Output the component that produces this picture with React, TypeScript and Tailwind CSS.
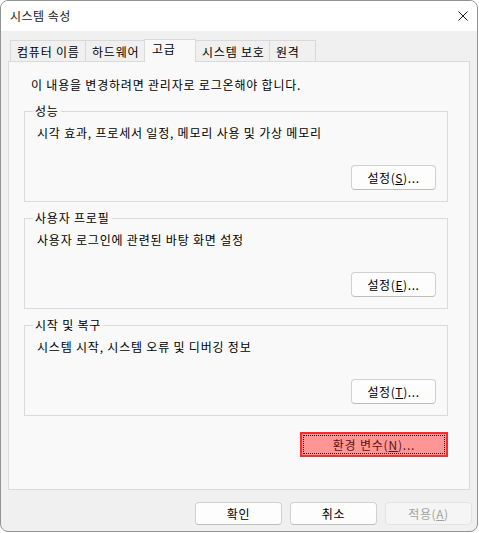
import type { ReactNode } from 'react'

const font = { fontFamily: '"Noto Sans CJK KR", "Noto Sans", sans-serif' }

const tabs = [
  { label: '컴퓨터 이름', w: 'w-[76px]' },
  { label: '하드웨어', w: 'w-[60px]' },
  { label: '고급', w: 'w-[52px]', active: true },
  { label: '시스템 보호', w: 'w-[75px]' },
  { label: '원격', w: 'w-[47px]' },
]

function WinButton({
  children,
  disabled = false,
  className = '',
}: {
  children: ReactNode
  disabled?: boolean
  className?: string
}) {
  return (
    <button
      type="button"
      disabled={disabled}
      className={`flex items-center justify-center rounded-[4px] border text-[12px] leading-[16px] tracking-[0.6px] ${
        disabled
          ? 'border-[#e3e3e3] bg-[#f5f5f5] text-[#a2a2a2]'
          : 'border-[#d0d0d0] border-b-[#bdbdbd] bg-[#fdfdfd] text-black'
      } ${className}`}
    >
      {children}
    </button>
  )
}

function Group({
  title,
  text,
  accel,
}: {
  title: string
  text: string
  accel: string
}) {
  return (
    <div className="relative flex h-[91px] w-[424px] flex-col justify-between border border-[#dadada] pt-[13px] pr-[11px] pb-[11px] pl-[12px]">
      <span className="absolute -top-[9px] left-[8px] bg-[#f9f9f9] px-[2px] text-[12px] leading-[16px] tracking-[0.8px] text-black">
        {title}
      </span>
      <p className="text-[12px] leading-[16px] tracking-[0.8px] text-black">{text}</p>
      <div className="flex justify-end">
        <WinButton className="h-[25px] w-[85px]">
          설정(<u>{accel}</u>)...
        </WinButton>
      </div>
    </div>
  )
}

export default function App() {
  return (
    <div style={font} className="h-[533px] w-[479px] bg-white">
      <div className="flex h-[532px] w-[478px] flex-col overflow-hidden rounded-[8px] border border-[#939393] bg-[#f0f0f0]">
        <div className="flex h-[30px] shrink-0 items-center justify-between bg-white pr-[9px] pl-[9px]">
          <span className="text-[12px] leading-[16px] tracking-[0.5px] text-[#1a1a1a]">시스템 속성</span>
          <svg width="10" height="10" viewBox="0 0 10 10" className="text-[#1a1a1a]">
            <path d="M0.5 0.5 L9.5 9.5 M9.5 0.5 L0.5 9.5" stroke="currentColor" strokeWidth="1" />
          </svg>
        </div>

        <div className="flex flex-1 flex-col px-[7px] pt-[8px]">
          <div className="relative z-10 ml-[2px] flex h-[22px] items-end">
            {tabs.map((t, i) =>
              t.active ? (
                <div
                  key={t.label}
                  className={`-mb-px -ml-px h-[23px] ${t.w} border border-b-0 border-[#d9d9d9] bg-[#f9f9f9] pt-[1px] pl-[7px] text-[12px] leading-[16px] tracking-[0.8px] text-black`}
                >
                  {t.label}
                </div>
              ) : (
                <div
                  key={t.label}
                  className={`${i > 0 ? '-ml-px' : ''} h-[21px] ${t.w} border border-b-0 border-[#d9d9d9] bg-[#f0f0f0] pt-[3px] pl-[6px] text-[12px] leading-[16px] tracking-[0.8px] text-black`}
                >
                  {t.label}
                </div>
              ),
            )}
          </div>

          <div className="flex h-[429px] w-[462px] flex-col border border-[#dadada] bg-[#f9f9f9] pt-[15px]">
            <p className="pl-[22px] text-[12px] leading-[16px] tracking-[0.8px] text-black">
              이 내용을 변경하려면 관리자로 로그온해야 합니다.
            </p>
            <div className="mt-[18px] ml-[15px] flex flex-col gap-[16px]">
              <Group title="성능" text="시각 효과, 프로세서 일정, 메모리 사용 및 가상 메모리" accel="S" />
              <Group title="사용자 프로필" text="사용자 로그인에 관련된 바탕 화면 설정" accel="E" />
              <Group title="시작 및 복구" text="시스템 시작, 시스템 오류 및 디버깅 정보" accel="T" />
              <div className="flex w-[424px] justify-end">
                <button
                  type="button"
                  className="relative flex h-[25px] w-[148px] items-center justify-center border-2 border-[#ff2b2b] bg-[#ff9595] text-[12px] leading-[16px] tracking-[0.8px] text-[#5a1414]"
                >
                  <span className="absolute inset-[1px] border border-dotted border-[#3a0a0a]" />
                  환경 변수(<u>N</u>)...
                </button>
              </div>
            </div>
          </div>

          <div className="mt-[12px] -mr-[2px] flex justify-end gap-[8px]">
            <WinButton className="h-[23px] w-[87px]">확인</WinButton>
            <WinButton className="h-[23px] w-[87px]">취소</WinButton>
            <WinButton disabled className="h-[23px] w-[87px]">
              적용(<u>A</u>)
            </WinButton>
          </div>
        </div>
      </div>
    </div>
  )
}
